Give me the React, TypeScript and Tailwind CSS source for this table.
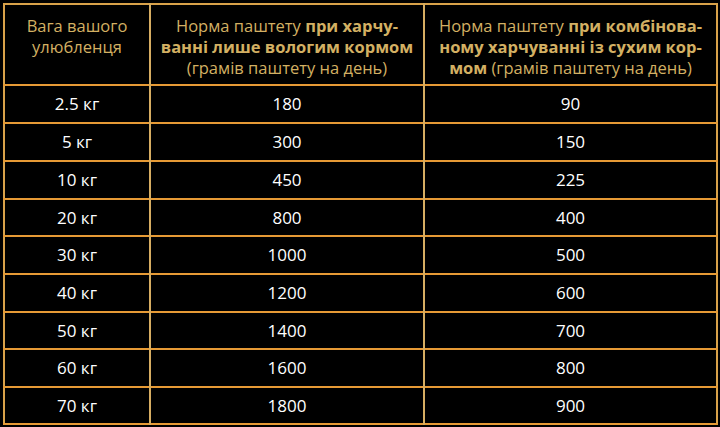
const rows: [string, string, string][] = [
  ["2.5 кг", "180", "90"],
  ["5 кг", "300", "150"],
  ["10 кг", "450", "225"],
  ["20 кг", "800", "400"],
  ["30 кг", "1000", "500"],
  ["40 кг", "1200", "600"],
  ["50 кг", "1400", "700"],
  ["60 кг", "1600", "800"],
  ["70 кг", "1800", "900"],
];

const heights = ["h-[38px]", "h-[38px]", "h-[38px]", "h-[37px]", "h-[38px]", "h-[38px]", "h-[37px]", "h-[38px]", "h-[37px]"];

export default function App() {
  return (
    <div className="w-[720px] h-[427px] bg-black p-[3px] overflow-hidden" style={{ fontFamily: "'Open Sans', 'Noto Sans', sans-serif" }}>
      <table className="table-fixed border-collapse w-[713px] border-2 border-[#d9a24a]">
        <colgroup>
          <col className="w-[146px]" />
          <col className="w-[274px]" />
          <col className="w-[293px]" />
        </colgroup>
        <thead>
          <tr className="h-[81px] border-b-2 border-[#e69a35]">
            <th className="align-top pt-[10px] px-1 text-[16.5px] leading-[21px] font-normal text-[#d3b063] border-r-2 border-[#d6ad62]">
              Вага вашого<br />улюбленця
            </th>
            <th className="align-top pt-[10px] px-1 text-[16.5px] leading-[21px] font-normal text-[#d3b063] border-r-2 border-[#d6ad62]">
              Норма паштету <b className="font-bold">при харчу-</b>
              <br />
              <b className="font-bold">ванні лише вологим кормом</b>
              <br />
              (грамів паштету на день)
            </th>
            <th className="align-top pt-[10px] px-1 text-[16.5px] leading-[21px] font-normal text-[#d3b063]">
              Норма паштету <b className="font-bold">при комбінова-</b>
              <br />
              <b className="font-bold">ному харчуванні із сухим кор-</b>
              <br />
              <b className="font-bold">мом</b> (грамів паштету на день)
            </th>
          </tr>
        </thead>
        <tbody>
          {rows.map((r, i) => (
            <tr key={r[0]} className={`${heights[i]} border-b-2 border-[#e69a35]`}>
              <td className="text-center text-white text-[17px] font-medium border-r-2 border-[#d6ad62]">{r[0]}</td>
              <td className="text-center text-white text-[17px] font-medium border-r-2 border-[#d6ad62]">{r[1]}</td>
              <td className="text-center text-white text-[17px] font-medium">{r[2]}</td>
            </tr>
          ))}
        </tbody>
      </table>
    </div>
  );
}
